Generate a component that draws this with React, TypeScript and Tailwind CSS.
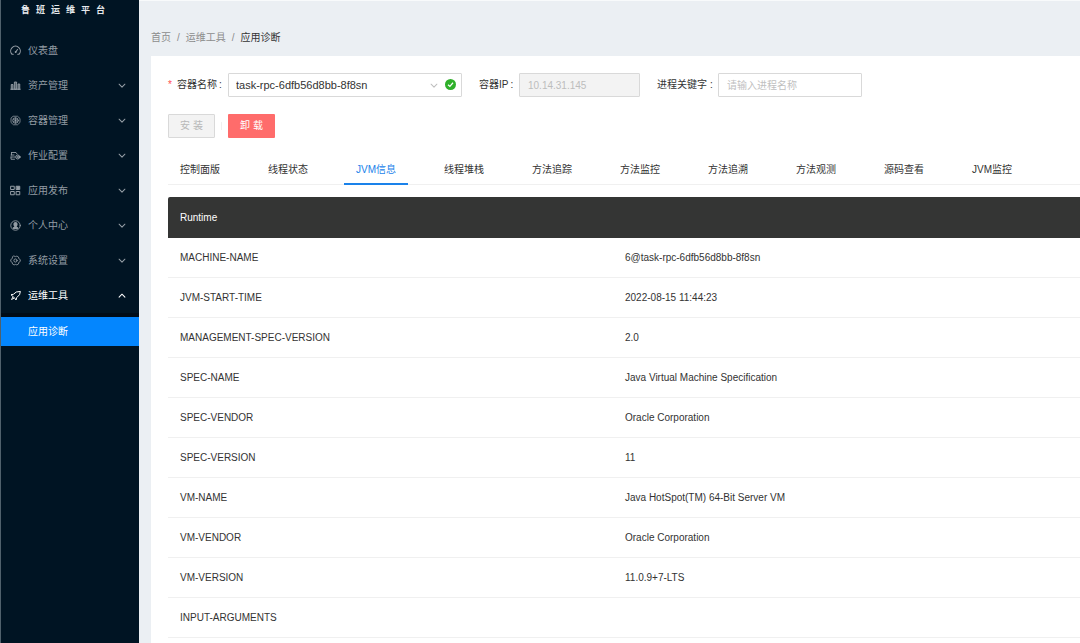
import React from 'react';

type IconProps = { className?: string };

function Svg({ className, children }: React.PropsWithChildren<IconProps>) {
  return (
    <svg
      viewBox="0 0 22 22"
      className={className ?? 'size-[11px] shrink-0'}
      fill="none"
      stroke="currentColor"
      strokeWidth="2"
      strokeLinecap="round"
      strokeLinejoin="round"
      aria-hidden="true"
    >
      {children}
    </svg>
  );
}

const GaugeIcon = () => (
  <Svg>
    <path d="M4 18.5A9.6 9.6 0 1 1 18 18.5H15.5M4 18.5H6.5M11 14.5L15 9" strokeWidth="2.2" />
    <circle cx="11" cy="14" r="1" fill="currentColor" />
  </Svg>
);
const BuildingsIcon = () => (
  <Svg>
    <path d="M2.5 18V9H6V18ZM8.8 18V4H13.2V18ZM16 18V8H19.5V18Z" fill="currentColor" fillOpacity="0.6" strokeWidth="1.8" />
    <path d="M1.5 18.5H20.5" />
  </Svg>
);
const ContainerIcon = () => (
  <Svg>
    <path d="M7 2.5H15L20 7V15L15 19.5H7L2 15V7Z" strokeWidth="1.5" />
    <circle cx="11" cy="11" r="5.5" strokeWidth="1.8" />
    <path d="M11 6V16M7 8.5L15 13.5M15 8.5L7 13.5" strokeWidth="1.6" />
  </Svg>
);
const JobIcon = () => (
  <Svg>
    <path d="M3 5H12L14 8M2 10H8M3 5V10M2 14V18.5H9M2 14H7" strokeWidth="1.8" />
    <circle cx="15.5" cy="14" r="4" strokeWidth="2" />
    <circle cx="15.5" cy="14" r="1.2" />
    <path d="M20 14H21.5M10 14H9" />
  </Svg>
);
const BlocksIcon = () => (
  <Svg>
    <path d="M2 2.5H8.5V9H2ZM2 13H8.5V19.5H2ZM13 13H19.5V19.5H13Z" strokeWidth="2" />
    <path d="M13 2.5H19.5V9H13Z" fill="currentColor" />
  </Svg>
);
const ProfileIcon = () => (
  <Svg>
    <circle cx="11" cy="11" r="9.5" strokeWidth="1.8" />
    <path
      d="M11 4C14 4 15.2 6.2 15.2 8.5C15.2 10.2 14.6 11.6 13.6 12.4V13.4L16.6 15.2L15.6 17.8H6.4L5.4 15.2L8.4 13.4V12.4C7.4 11.6 6.8 10.2 6.8 8.5C6.8 6.2 8 4 11 4Z"
      fill="currentColor"
      stroke="none"
    />
  </Svg>
);
const SettingIcon = () => (
  <Svg>
    <path
      d="M8.2 2.2L11 3.2L13.8 2.2L17 4L17.4 7L20.5 9.2V12.8L17.4 15L17 18L13.8 19.8L11 18.8L8.2 19.8L5 18L4.6 15L1.5 12.8V9.2L4.6 7L5 4Z"
      strokeWidth="1.7"
    />
    <circle cx="11" cy="11" r="3.2" strokeWidth="1.8" />
  </Svg>
);
const RocketIcon = () => (
  <Svg>
    <path d="M20 3L12.5 4L7 8.5L2 9.5L5.5 12.5L9.5 16.5L12 20L13.5 15L18.5 10Z" strokeWidth="2" />
    <path d="M5.5 14.5L3 19L7.5 16.8" strokeWidth="1.8" />
  </Svg>
);

function Chevron({ up = false, className }: { up?: boolean; className?: string }) {
  return (
    <Svg className={className ?? 'size-2 shrink-0'}>
      <path d={up ? 'M3 14L11 6L19 14' : 'M3 6L11 14L19 6'} strokeWidth="2.8" />
    </Svg>
  );
}

const menu = [
  { label: '仪表盘', Icon: GaugeIcon, expandable: false, open: false },
  { label: '资产管理', Icon: BuildingsIcon, expandable: true, open: false },
  { label: '容器管理', Icon: ContainerIcon, expandable: true, open: false },
  { label: '作业配置', Icon: JobIcon, expandable: true, open: false },
  { label: '应用发布', Icon: BlocksIcon, expandable: true, open: false },
  { label: '个人中心', Icon: ProfileIcon, expandable: true, open: false },
  { label: '系统设置', Icon: SettingIcon, expandable: true, open: false },
  { label: '运维工具', Icon: RocketIcon, expandable: true, open: true },
];

const tabs = [
  '控制面版',
  '线程状态',
  'JVM信息',
  '线程堆栈',
  '方法追踪',
  '方法监控',
  '方法追溯',
  '方法观测',
  '源码查看',
  'JVM监控',
];

const rows: [string, string][] = [
  ['MACHINE-NAME', '6@task-rpc-6dfb56d8bb-8f8sn'],
  ['JVM-START-TIME', '2022-08-15 11:44:23'],
  ['MANAGEMENT-SPEC-VERSION', '2.0'],
  ['SPEC-NAME', 'Java Virtual Machine Specification'],
  ['SPEC-VENDOR', 'Oracle Corporation'],
  ['SPEC-VERSION', '11'],
  ['VM-NAME', 'Java HotSpot(TM) 64-Bit Server VM'],
  ['VM-VENDOR', 'Oracle Corporation'],
  ['VM-VERSION', '11.0.9+7-LTS'],
  ['INPUT-ARGUMENTS', ''],
];

function Sidebar() {
  return (
    <aside className="w-[139px] shrink-0 border-l border-[#50616c] bg-[#001423]">
      <h1 className="flex h-9 gap-[6px] pt-[5px] pl-5 text-[9px] leading-[10px] font-bold text-[#e6e9ec]">
        {'鲁班运维平台'.split('').map((char) => (
          <span key={char}>{char}</span>
        ))}
      </h1>
      <nav>
        <ul className="flex flex-col gap-[6px]">
          {menu.map(({ label, Icon, expandable, open }) => (
            <li key={label}>
              <button
                type="button"
                aria-expanded={expandable ? open : undefined}
                className={
                  open
                    ? 'flex h-[29px] w-full items-center gap-[7px] pr-[13px] pl-[9px] text-white'
                    : 'flex h-[29px] w-full items-center gap-[7px] pr-[13px] pl-[9px] text-[#939ca4]'
                }
              >
                <Icon />
                <span className="grow text-left">{label}</span>
                {expandable && <Chevron up={open} />}
              </button>
            </li>
          ))}
        </ul>
        <ul className="mt-[3px] bg-[#000c17] pt-1">
          <li>
            <a href="#diagnosis" className="flex h-[29px] items-center bg-[#0486fe] pl-[27px] text-white">
              应用诊断
            </a>
          </li>
        </ul>
      </nav>
    </aside>
  );
}

function Filters() {
  return (
    <form className="flex flex-wrap items-center gap-x-[17px] gap-y-2">
      <div className="flex items-center">
        <label htmlFor="container" className="flex w-[60px] items-center whitespace-nowrap">
          <span className="w-[9px] text-[#ff4d4f]">*</span>容器名称
          <span className="ml-[2px]">:</span>
        </label>
        <div className="relative">
          <select
            id="container"
            className="h-6 w-[234px] appearance-none rounded-[1px] border border-[#d9d9d9] bg-white pr-10 pl-[7px] text-[11px]"
          >
            <option>task-rpc-6dfb56d8bb-8f8sn</option>
          </select>
          <Chevron className="pointer-events-none absolute top-[9px] right-6 size-2 text-[#bfbfbf]" />
          <svg viewBox="0 0 22 22" className="pointer-events-none absolute top-[6px] right-[6px] size-[11px]" aria-hidden="true">
            <circle cx="11" cy="11" r="11" fill="#2fb02a" />
            <path d="M6 11.5L9.8 15L16 7.5" fill="none" stroke="#fff" strokeWidth="2.4" />
          </svg>
        </div>
      </div>
      <div className="flex items-center">
        <label htmlFor="ip" className="w-10 whitespace-nowrap">
          容器IP<span className="ml-[2px]">:</span>
        </label>
        <input
          id="ip"
          disabled
          defaultValue="10.14.31.145"
          className="h-6 w-[121px] rounded-[1px] border border-[#d9d9d9] bg-[#f3f3f3] px-2 text-[#bdbdbd]"
        />
      </div>
      <div className="flex items-center">
        <label htmlFor="keyword" className="w-[61px] whitespace-nowrap">
          进程关键字<span className="ml-[3px]">:</span>
        </label>
        <input
          id="keyword"
          placeholder="请输入进程名称"
          className="h-6 w-36 rounded-[1px] border border-[#d9d9d9] bg-white px-2 placeholder:text-[#bfbfbf]"
        />
      </div>
    </form>
  );
}

export default function App() {
  return (
    <div className="flex h-screen overflow-hidden bg-[#ebeff3] font-['Liberation_Sans','Noto_Sans_CJK_SC',sans-serif] text-[10px] leading-4 text-[#333]">
      <Sidebar />
      <div className="flex min-w-0 grow flex-col border-t border-[#f8fafb] pl-3">
        <nav aria-label="breadcrumb" className="pt-[29px] pb-[10px]">
          <ol className="flex gap-[6px] text-[#8c8c8c]">
            <li>
              <a href="#home">首页</a>
            </li>
            <li aria-hidden="true">/</li>
            <li>
              <a href="#tools">运维工具</a>
            </li>
            <li aria-hidden="true">/</li>
            <li className="text-[#333]">应用诊断</li>
          </ol>
        </nav>
        <main className="grow bg-white pt-[17px] pl-[17px]">
          <Filters />
          <div className="mt-[17px] flex items-center gap-[6px]">
            <button
              type="button"
              disabled
              className="h-6 w-[47px] rounded-[1px] border border-[#d9d9d9] bg-[#f3f3f3] text-[#b8b8b8]"
            >
              安 装
            </button>
            <span className="h-2 w-px bg-[#f0f0f0]" />
            <button type="button" className="h-6 w-[47px] rounded-[1px] bg-[#ff6c6b] text-white">
              卸 载
            </button>
          </div>
          <div role="tablist" className="mt-[15px] flex gap-6 border-b border-[#f0f0f0]">
            {tabs.map((tab) => (
              <button
                key={tab}
                type="button"
                role="tab"
                aria-selected={tab === 'JVM信息'}
                className={
                  tab === 'JVM信息'
                    ? '-mb-px h-8 shrink-0 border-b-2 border-[#1a82ea] px-3 pt-[3px] text-[#1a82ea]'
                    : '-mb-px h-8 shrink-0 border-b-2 border-transparent px-3 pt-[3px]'
                }
              >
                {tab}
              </button>
            ))}
          </div>
          <table className="mt-3 w-full table-fixed border-separate border-spacing-0 text-left">
            <colgroup>
              <col className="w-[445px]" />
              <col />
            </colgroup>
            <thead>
              <tr className="h-[41px]">
                <th colSpan={2} className="rounded-tl-xs bg-[#343534] px-3 font-medium text-white">
                  Runtime
                </th>
              </tr>
            </thead>
            <tbody>
              {rows.map(([name, value]) => (
                <tr key={name} className="h-10">
                  <td className="border-b border-[#f0f0f0] px-3">{name}</td>
                  <td className="border-b border-[#f0f0f0] px-3">{value}</td>
                </tr>
              ))}
            </tbody>
          </table>
        </main>
      </div>
    </div>
  );
}
